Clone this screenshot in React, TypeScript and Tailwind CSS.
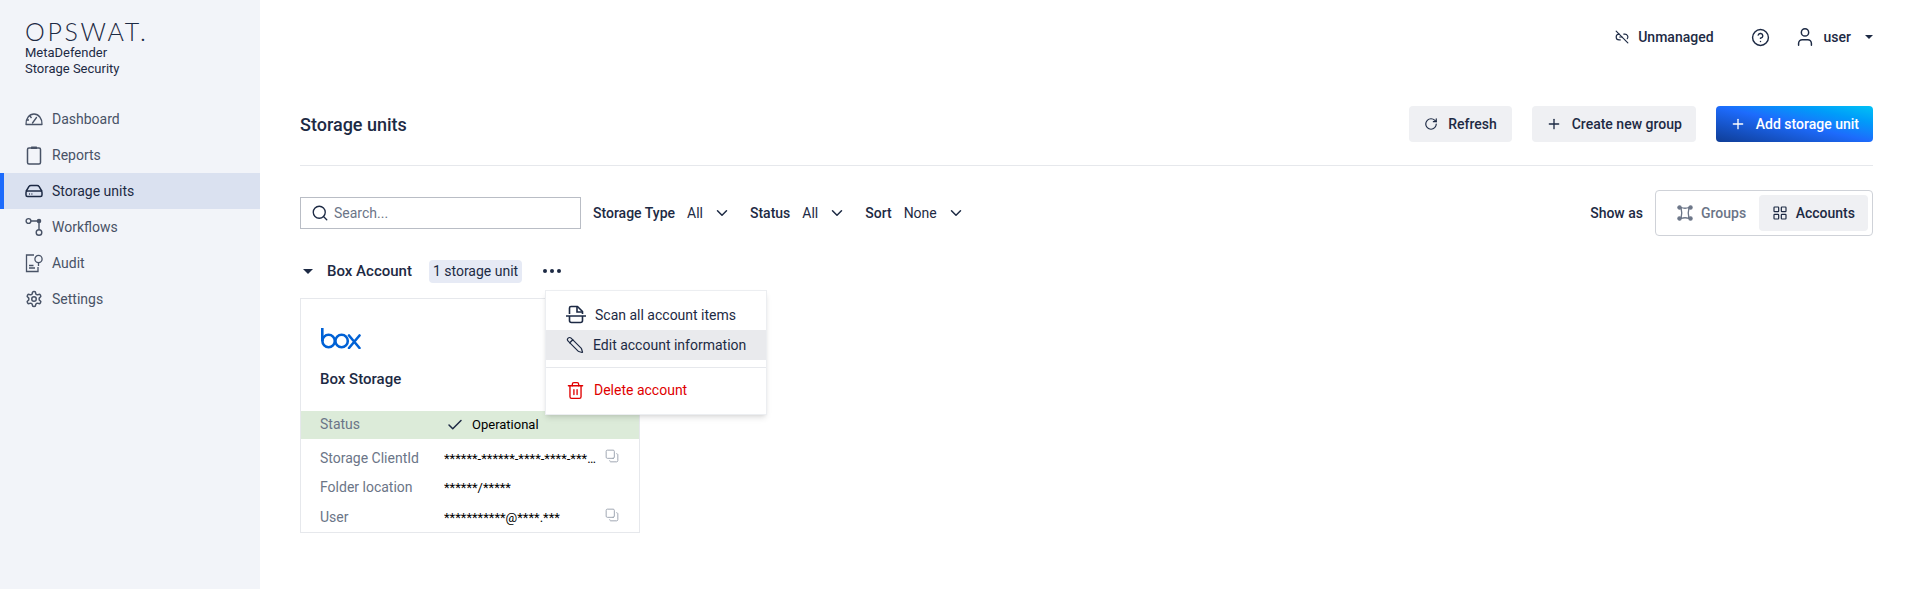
import { Check, ChevronDown, CircleHelp, Copy, Link2Off, Pencil, Plus, RotateCw, Search, Trash2, User, LayoutGrid } from 'lucide-react';

const navItems = [
  { label: 'Dashboard', icon: <DashIcon /> },
  { label: 'Reports', icon: <ReportIcon /> },
  { label: 'Storage units', icon: <DriveIcon />, active: true },
  { label: 'Workflows', icon: <FlowIcon /> },
  { label: 'Audit', icon: <AuditIcon /> },
  { label: 'Settings', icon: <GearIcon /> },
];

function DashIcon() {
  return (
    <svg width="18" height="18" viewBox="0 0 18 18" fill="none" stroke="currentColor" strokeWidth="1.3">
      <path d="M1 14.5 C0.6 8.5 4.5 4 9 4 C13.5 4 17.4 8.5 17 14.5 Z" strokeLinejoin="round" />
      <path d="M7.5 13 L11.5 7.5" strokeLinecap="round" />
      <path d="M5 6 L6.5 8 M4 10 L2 10" />
    </svg>
  );
}

function ReportIcon() {
  return (
    <svg width="18" height="20" viewBox="0 0 18 20" fill="none" stroke="currentColor" strokeWidth="1.5">
      <rect x="2.5" y="3" width="13" height="16" rx="1.5" />
      <rect x="6" y="1.5" width="6" height="2.5" fill="currentColor" stroke="none" rx="0.5" />
    </svg>
  );
}

function DriveIcon() {
  return (
    <svg width="18" height="18" viewBox="0 0 18 18" fill="none" stroke="currentColor" strokeWidth="1.5">
      <path d="M1 9.5 L4 4.5 Q4.5 3.5 6 3.5 H12 Q13.5 3.5 14 4.5 L17 9.5" />
      <rect x="1" y="9" width="16" height="5.5" rx="1.5" />
      <path d="M4 12 H4.8 M6.5 12 H7.3" />
    </svg>
  );
}

function FlowIcon() {
  return (
    <svg width="18" height="20" viewBox="0 0 18 20" fill="none" stroke="currentColor" strokeWidth="1.4">
      <circle cx="3.5" cy="4" r="2.4" />
      <circle cx="14" cy="15.5" r="2.8" />
      <circle cx="14" cy="4" r="1.6" fill="currentColor" />
      <path d="M6 4 H14 V12.5" />
    </svg>
  );
}

function AuditIcon() {
  return (
    <svg width="18" height="20" viewBox="0 0 18 20" fill="none" stroke="currentColor" strokeWidth="1.3">
      <path d="M9 2 H1.5 V18.5 H13 V14" />
      <path d="M4 12.5 H8.5 M4 15 H10" />
      <circle cx="13.5" cy="6" r="3.6" />
      <path d="M13.5 9.6 V13" />
    </svg>
  );
}

function GearIcon() {
  return (
    <svg width="18" height="18" viewBox="0 0 24 24" fill="none" stroke="currentColor" strokeWidth="2" strokeLinecap="round" strokeLinejoin="round">
      <path d="M12.22 2h-.44a2 2 0 0 0-2 2v.18a2 2 0 0 1-1 1.73l-.43.25a2 2 0 0 1-2 0l-.15-.08a2 2 0 0 0-2.73.73l-.22.38a2 2 0 0 0 .73 2.73l.15.1a2 2 0 0 1 1 1.72v.51a2 2 0 0 1-1 1.74l-.15.09a2 2 0 0 0-.73 2.73l.22.38a2 2 0 0 0 2.73.73l.15-.08a2 2 0 0 1 2 0l.43.25a2 2 0 0 1 1 1.73V20a2 2 0 0 0 2 2h.44a2 2 0 0 0 2-2v-.18a2 2 0 0 1 1-1.73l.43-.25a2 2 0 0 1 2 0l.15.08a2 2 0 0 0 2.73-.73l.22-.39a2 2 0 0 0-.73-2.73l-.15-.08a2 2 0 0 1-1-1.74v-.5a2 2 0 0 1 1-1.74l.15-.09a2 2 0 0 0 .73-2.73l-.22-.38a2 2 0 0 0-2.73-.73l-.15.08a2 2 0 0 1-2 0l-.43-.25a2 2 0 0 1-1-1.73V4a2 2 0 0 0-2-2z" />
      <circle cx="12" cy="12" r="3" />
    </svg>
  );
}

function GroupsIcon() {
  return (
    <svg width="16" height="16" viewBox="0 0 16 16" fill="none" stroke="currentColor" strokeWidth="1.3">
      <circle cx="2.5" cy="2.5" r="1.6" fill="currentColor" />
      <circle cx="13.5" cy="2.5" r="1.6" fill="currentColor" />
      <circle cx="2.5" cy="13.5" r="1.6" fill="currentColor" />
      <circle cx="13.5" cy="13.5" r="1.6" fill="currentColor" />
      <path d="M4 2.5 Q8 4 12 2.5 Q10.5 8 12 13.5 Q8 12 4 13.5 Q5.5 8 4 2.5 Z" />
    </svg>
  );
}

function ScanIcon() {
  return (
    <svg width="20" height="20" viewBox="0 0 20 20" fill="none" stroke="#1d2a44" strokeWidth="1.6">
      <path d="M3.5 9 V3 Q3.5 1.5 5 1.5 H11.5 L16.5 6.5 V9" strokeLinejoin="round" />
      <path d="M11 1.5 V7 H16.5" />
      <path d="M0.5 11 H19.5" strokeLinecap="round" />
      <path d="M3.5 11 V15.5 Q3.5 17.5 5.5 17.5 H14.5 Q16.5 17.5 16.5 15.5 V11" />
    </svg>
  );
}

function BoxLogo() {
  return (
    <svg width="40" height="21" viewBox="0 0 40 21" fill="none" stroke="#0061d5" strokeWidth="2.6">
      <path d="M1.3 0 V13" />
      <circle cx="7.6" cy="13" r="6.2" />
      <circle cx="20.6" cy="13" r="6.2" />
      <path d="M28 7.5 L38.5 20 M38.5 7.5 L28 20" strokeLinecap="round" />
    </svg>
  );
}

function Filter({ label, value }: { label: string; value: string }) {
  return (
    <div className="flex items-center">
      <span className="font-medium text-[#1d2a44]">{label}</span>
      <span className="ml-3 text-[#1d2a44]">{value}</span>
      <ChevronDown className="ml-2.5 h-[18px] w-[18px] text-[#1d2a44]" strokeWidth={2} />
    </div>
  );
}

function InfoRow({ label, value, copy }: { label: string; value: string; copy?: boolean }) {
  return (
    <div className="flex h-[29.5px] items-center pl-[19px]">
      <span className="w-[124px] text-[#6b7587]">{label}</span>
      <span className="w-[152px] truncate text-[13px] text-black">{value}</span>
      {copy && <Copy className="ml-[9px] h-[14px] w-[14px] -translate-y-0.5 -scale-100 text-[#9aa1ae]" strokeWidth={1.6} />}
    </div>
  );
}

export default function App() {
  return (
    <div className="flex h-[589px] overflow-hidden bg-white text-[14px] text-[#1d2a44]" style={{ fontFamily: 'Roboto, "Noto Sans", sans-serif' }}>
      <aside className="w-[260px] shrink-0 bg-[#f2f4f9]">
        <div className="px-[25px] pt-[21px]">
          <div className="text-[25px] leading-[21px] font-light tracking-[2.6px] text-[#1d2a44]" style={{ fontFamily: 'Lato, sans-serif' }}>OPSWAT.</div>
          <div className="mt-[3px] text-[13px] leading-4 text-[#1d2a44]">MetaDefender</div>
          <div className="text-[13px] leading-4 text-[#1d2a44]">Storage Security</div>
        </div>
        <nav className="mt-[24px]">
          {navItems.map((item) => (
            <div
              key={item.label}
              className={`flex h-9 items-center gap-[9px] border-l-4 pl-[21px] ${item.active ? 'border-[#1d6bfc] bg-[#dae1f0] text-[#1d2a44]' : 'border-transparent text-[#485266]'}`}
            >
              <span className="flex w-[18px] justify-center">{item.icon}</span>
              <span>{item.label}</span>
            </div>
          ))}
        </nav>
      </aside>

      <main className="min-w-0 flex-1 pr-[39px] pl-10">
        <div className="flex h-[74px] items-center justify-end font-medium">
          <Link2Off className="h-[14px] w-[14px]" />
          <span className="ml-[9px] text-[#1d2a44]">Unmanaged</span>
          <CircleHelp className="ml-[37px] h-[19px] w-[19px]" strokeWidth={1.8} />
          <User className="ml-[24px] h-[22px] w-[22px]" strokeWidth={1.6} />
          <span className="ml-2">user</span>
          <span className="ml-3.5 border-x-4 border-t-4 border-x-transparent border-t-[#1d2a44]" />
        </div>

        <div className="mt-8 flex items-center border-b border-[#e6e8ec] pb-[23px]">
          <h1 className="text-[18px] font-medium">Storage units</h1>
          <div className="ml-auto flex items-center gap-5 font-medium">
            <button className="flex h-9 items-center gap-2.5 rounded bg-[#eff0f3] px-[15px]">
              <RotateCw className="h-[14px] w-[14px]" />
              Refresh
            </button>
            <button className="flex h-9 items-center gap-2.5 rounded bg-[#eff0f3] px-[14px]">
              <Plus className="h-4 w-4" />
              Create new group
            </button>
            <button className="flex h-9 items-center gap-2.5 rounded bg-linear-to-tr from-[#0f3d96] via-[#1d6bfc] to-[#00c2f5] px-[14px] text-white">
              <Plus className="h-4 w-4" />
              Add storage unit
            </button>
          </div>
        </div>

        <div className="mt-6 flex items-center">
          <div className="flex h-8 w-[281px] items-center border border-[#b9bdc5] px-2.5">
            <Search className="h-[18px] w-[18px]" strokeWidth={1.8} />
            <span className="ml-[5px] text-[#6b7587]">Search...</span>
          </div>
          <div className="ml-3 flex items-center gap-[19px]">
            <Filter label="Storage Type" value="All" />
            <Filter label="Status" value="All" />
            <Filter label="Sort" value="None" />
          </div>
          <span className="ml-auto font-medium">Show as</span>
          <div className="ml-3 flex h-[46px] w-[218px] items-center justify-between rounded border border-[#cfd2d8] p-1">
            <div className="flex h-9 items-center gap-2 pl-[17px] font-medium text-[#6b7587]">
              <GroupsIcon />
              Groups
            </div>
            <div className="flex h-9 items-center gap-2 rounded bg-[#eff0f3] px-[13px] font-medium">
              <LayoutGrid className="h-4 w-4" strokeWidth={1.8} />
              Accounts
            </div>
          </div>
        </div>

        <div className="relative mt-[22px]">
          <div className="flex h-[26px] items-center">
            <span className="ml-[3px] border-x-[5px] border-t-[5px] border-x-transparent border-t-[#1d2a44]" />
            <span className="ml-3.5 text-[15px] font-medium">Box Account</span>
            <span className="ml-[17px] rounded bg-[#e6eaf5] px-1 py-[1px] text-[14px]">1 storage unit</span>
            <span className="ml-[21px] flex gap-[3px]">
              <span className="h-1 w-1 rounded-full bg-[#1d2a44]" />
              <span className="h-1 w-1 rounded-full bg-[#1d2a44]" />
              <span className="h-1 w-1 rounded-full bg-[#1d2a44]" />
            </span>
          </div>

          <div className="mt-[14px] h-[235px] w-[340px] border border-[#e6e8ec]">
            <div className="pt-[29px] pl-[20px]">
              <BoxLogo />
            </div>
            <div className="mt-[19px] pl-[19px] text-[15px] font-medium">Box Storage</div>
            <div className="mt-[20px] flex h-7 items-center bg-[#dcebd9] pl-[19px]">
              <span className="w-[126px] text-[#6b7587]">Status</span>
              <Check className="h-[18px] w-[18px]" />
              <span className="ml-[8px] text-[13px] text-black">Operational</span>
            </div>
            <div className="mt-[5px]">
              <InfoRow label="Storage ClientId" value="******-******-****-****-************" copy />
              <InfoRow label="Folder location" value="******/*****" />
              <InfoRow label="User" value="***********@****.***" copy />
            </div>
          </div>

          <div className="absolute top-[32px] left-[245px] w-[222px] border border-[#eceef1] bg-white py-[9px] shadow-md">
            <div className="flex h-[30px] items-center gap-[9px] pl-[20px]">
              <ScanIcon />
              Scan all account items
            </div>
            <div className="flex h-[30px] items-center gap-[9px] bg-[#e9eaed] pl-[20px]">
              <Pencil className="h-[18px] w-[18px] -scale-x-100" strokeWidth={1.6} />
              Edit account information
            </div>
            <div className="mt-[7px] flex h-[38px] items-center gap-[9px] border-t border-[#e6e8ec] pt-[7px] pl-[20px] text-[#e00000]">
              <Trash2 className="h-[19px] w-[19px]" strokeWidth={1.7} />
              Delete account
            </div>
          </div>
        </div>
      </main>
    </div>
  );
}
